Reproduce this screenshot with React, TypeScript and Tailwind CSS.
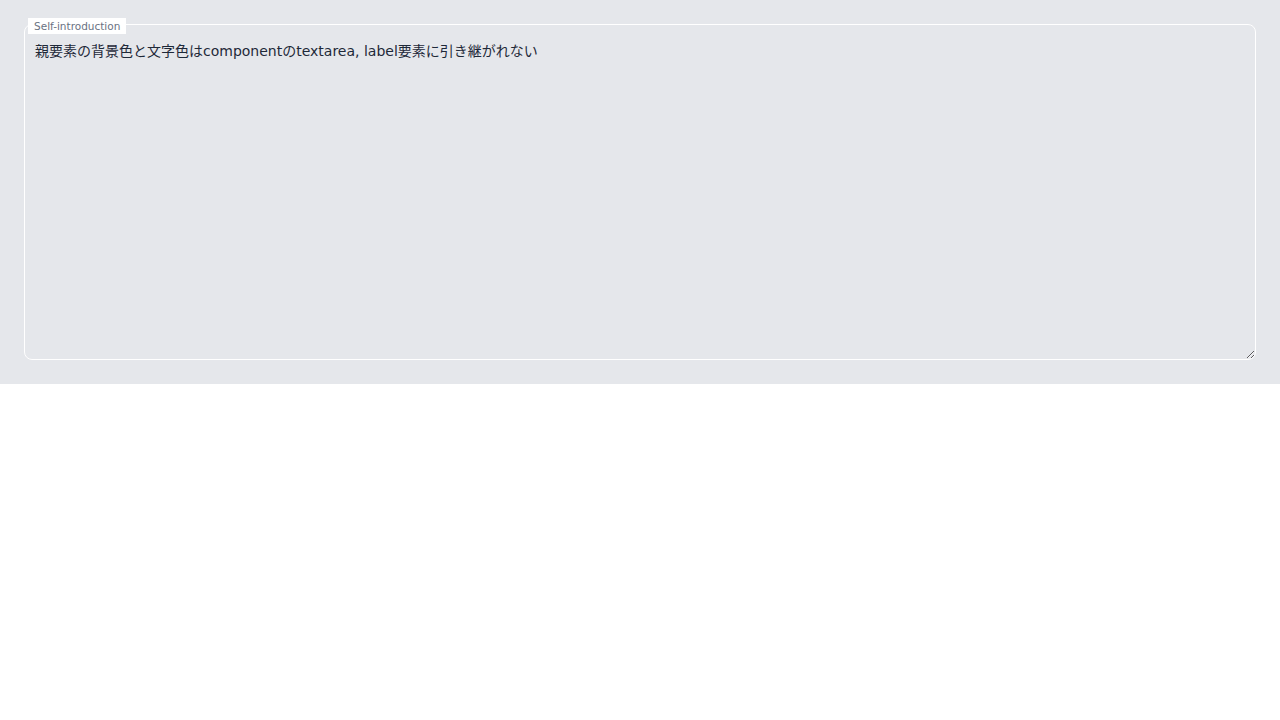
export default function App() {
  return (
    <div className="bg-gray-200 p-6 font-['DejaVu_Sans','Noto_Sans_CJK_JP',sans-serif]">
      <div className="relative">
        {/* floating label */}
        <label
          htmlFor="intro"
          className="absolute left-1 top-[-6px] bg-white px-1.5 text-[10.5px] leading-4 text-gray-500"
        >
          Self-introduction
        </label>
        <textarea
          id="intro"
          defaultValue="親要素の背景色と文字色はcomponentのtextarea, label要素に引き継がれない"
          className="block h-[336px] w-full rounded-lg border border-white bg-transparent px-2.5 pt-4 text-sm text-gray-800 outline-none"
        />
      </div>
    </div>
  );
}
